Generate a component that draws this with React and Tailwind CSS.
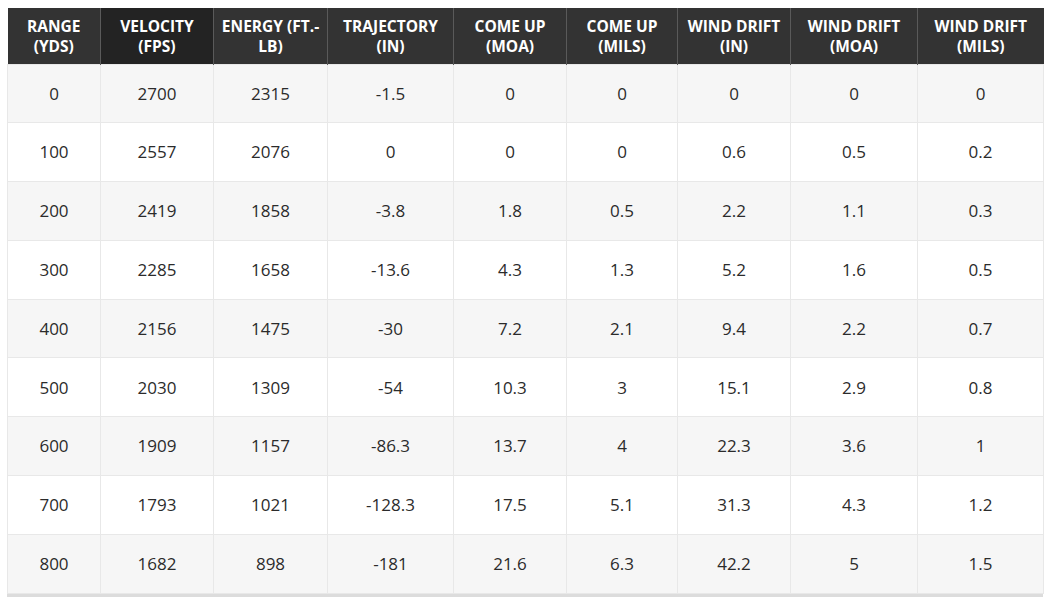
const headers = [
    ['RANGE', '(YDS)'],
    ['VELOCITY', '(FPS)'],
    ['ENERGY (FT.-', 'LB)'],
    ['TRAJECTORY', '(IN)'],
    ['COME UP', '(MOA)'],
    ['COME UP', '(MILS)'],
    ['WIND DRIFT', '(IN)'],
    ['WIND DRIFT', '(MOA)'],
    ['WIND DRIFT', '(MILS)'],
];

const widths = [93, 113, 114, 126, 113, 111, 113, 127, 126];

const rows = [
    ['0', '2700', '2315', '-1.5', '0', '0', '0', '0', '0'],
    ['100', '2557', '2076', '0', '0', '0', '0.6', '0.5', '0.2'],
    ['200', '2419', '1858', '-3.8', '1.8', '0.5', '2.2', '1.1', '0.3'],
    ['300', '2285', '1658', '-13.6', '4.3', '1.3', '5.2', '1.6', '0.5'],
    ['400', '2156', '1475', '-30', '7.2', '2.1', '9.4', '2.2', '0.7'],
    ['500', '2030', '1309', '-54', '10.3', '3', '15.1', '2.9', '0.8'],
    ['600', '1909', '1157', '-86.3', '13.7', '4', '22.3', '3.6', '1'],
    ['700', '1793', '1021', '-128.3', '17.5', '5.1', '31.3', '4.3', '1.2'],
    ['800', '1682', '898', '-181', '21.6', '6.3', '42.2', '5', '1.5'],
];

export default function App() {
    return (
        <div className="h-[600px] w-[1052px] bg-white pl-[7px] pt-[8px] font-['Open_Sans',sans-serif]">
            <div className="w-[1036px] border-b-[3px] border-[#dcdcdc]">
                <table className="w-[1036px] table-fixed border-collapse text-center text-[17px] text-[#2b2b2b]">
                    <colgroup>
                        {widths.map((w, i) => (
                            <col key={i} style={{ width: w }} />
                        ))}
                    </colgroup>
                    <thead>
                        <tr className="h-[56px]">
                            {headers.map(([a, b], i) => (
                                <th
                                    key={i}
                                    className={`border-l border-[#5a5a5a] px-1 align-middle text-[15.5px] leading-[20px] font-bold text-white first:border-l-0 ${
                                        i === 1 ? 'bg-[#232323]' : 'bg-[#333333]'
                                    }`}
                                >
                                    {a}
                                    <br />
                                    {b}
                                </th>
                            ))}
                        </tr>
                    </thead>
                    <tbody>
                        {rows.map((row, r) => (
                            <tr
                                key={r}
                                className={`h-[58.8px] ${
                                    r % 2 === 0 ? 'bg-[#f6f6f6]' : 'bg-white'
                                }`}
                            >
                                {row.map((v, c) => (
                                    <td
                                        key={c}
                                        className="border border-[#e8e8e8] px-1 align-middle"
                                    >
                                        {v}
                                    </td>
                                ))}
                            </tr>
                        ))}
                    </tbody>
                </table>
            </div>
        </div>
    );
}
